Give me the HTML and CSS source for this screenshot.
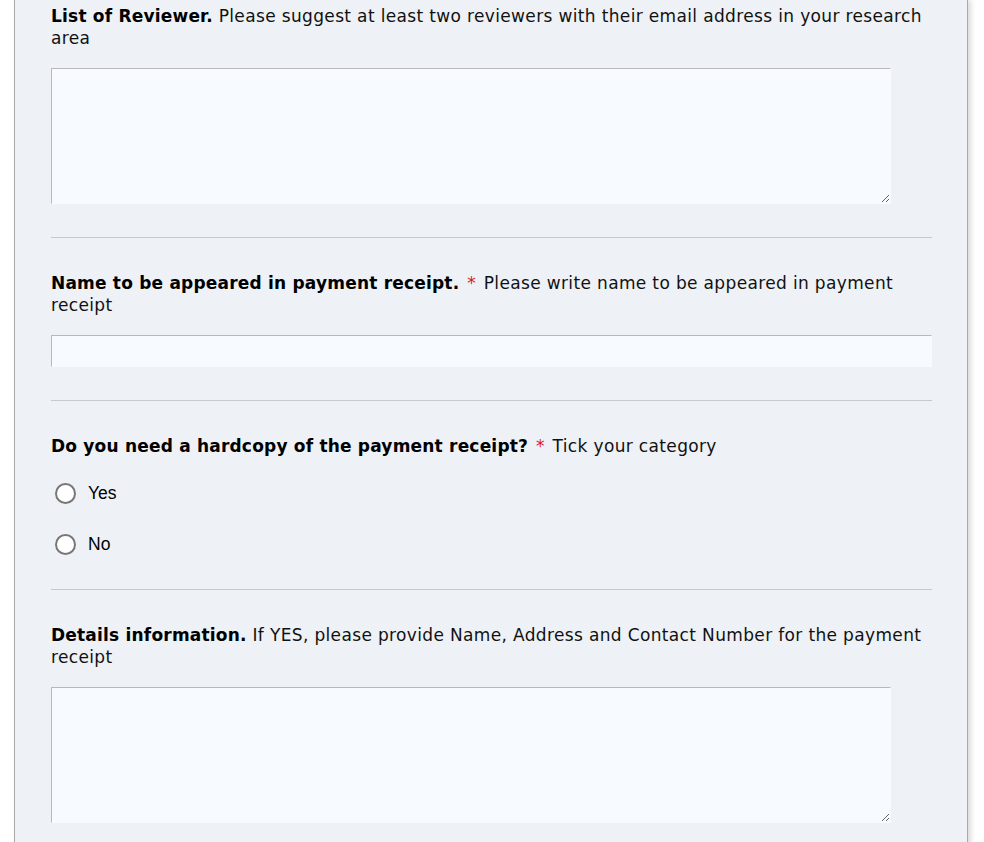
FILE: index.html
```html
<!DOCTYPE html>
<html lang="en">
<head>
<meta charset="utf-8">
<title>Form</title>
<link rel="stylesheet" href="styles.css">
</head>
<body>
<div class="panel">
  <div class="field first">
    <label class="label" for="reviewers"><b>List of Reviewer.</b> Please suggest at least two reviewers with their email address in your research area</label>
    <textarea id="reviewers" class="area"></textarea>
  </div>
  <div class="field">
    <label class="label" for="rname"><b>Name to be appeared in payment receipt.</b> <span class="req">*</span> Please write name to be appeared in payment receipt</label>
    <input id="rname" class="text" type="text">
  </div>
  <div class="field">
    <div class="label"><b>Do you need a hardcopy of the payment receipt?</b> <span class="req">*</span> Tick your category</div>
    <div class="radios">
      <label class="radio"><input type="radio" name="hc" class="circle"><span>Yes</span></label>
      <label class="radio"><input type="radio" name="hc" class="circle"><span>No</span></label>
    </div>
  </div>
  <div class="field last">
    <label class="label" for="details"><b>Details information.</b> If YES, please provide Name, Address and Contact Number for the payment receipt</label>
    <textarea id="details" class="area"></textarea>
  </div>
</div>
</body>
</html>
```
FILE: styles.css
```css
html, body {
  margin: 0;
  padding: 0;
  background: #ffffff;
}
body {
  font-family: "DejaVu Sans", Verdana, sans-serif;
  font-size: 17px;
  line-height: 22px;
  letter-spacing: 0.35px;
  color: #111;
}
.panel {
  margin-left: 14px;
  width: 954px;
  min-height: 842px;
  box-sizing: border-box;
  background: #eef1f6;
  border-left: 1px solid #a9a9a9;
  border-right: 1px solid #a9a9a9;
  box-shadow: 3px 0 5px rgba(0, 0, 0, 0.14);
  padding: 0 35px 0 36px;
}
.field {
  padding: 34px 0 33px;
  border-bottom: 1px solid #c8c9cc;
  display: flex;
  flex-direction: column;
  align-items: flex-start;
}
.field.first {
  padding-top: 5px;
}
.field.last {
  border-bottom: none;
  padding-bottom: 40px;
}
.label {
  display: block;
  width: 100%;
}
.label b {
  font-weight: bold;
  color: #000;
  letter-spacing: 0.2px;
}
.req {
  color: #d82020;
  margin: 0 2px;
}
.area {
  margin-top: 19px;
  width: 840px;
  height: 136px;
  box-sizing: border-box;
  background: #f7faff;
  border: 1px solid #f7faff;
  border-top-color: #b9b9b9;
  border-left-color: #b9b9b9;
  padding: 4px;
  font: inherit;
  display: block;
  outline: none;
}
.text {
  margin-top: 19px;
  width: 100%;
  height: 32px;
  box-sizing: border-box;
  background: #f7faff;
  border: 1px solid #f7faff;
  border-top-color: #b9b9b9;
  border-left-color: #b9b9b9;
  padding: 4px;
  font: inherit;
  display: block;
  outline: none;
}
.radios {
  display: flex;
  flex-direction: column;
  gap: 27px;
  margin-top: 24px;
  padding-left: 4px;
  padding-bottom: 0;
}
.radio {
  display: flex;
  align-items: center;
  gap: 12px;
  font-family: "Liberation Sans", Arial, sans-serif;
  font-size: 17.5px;
  line-height: 24px;
  letter-spacing: 0;
  color: #000;
}
.circle {
  appearance: none;
  -webkit-appearance: none;
  margin: 0;
  width: 21px;
  height: 21px;
  border: 2px solid #777;
  border-radius: 50%;
  background: #fff;
  box-sizing: border-box;
}
```
